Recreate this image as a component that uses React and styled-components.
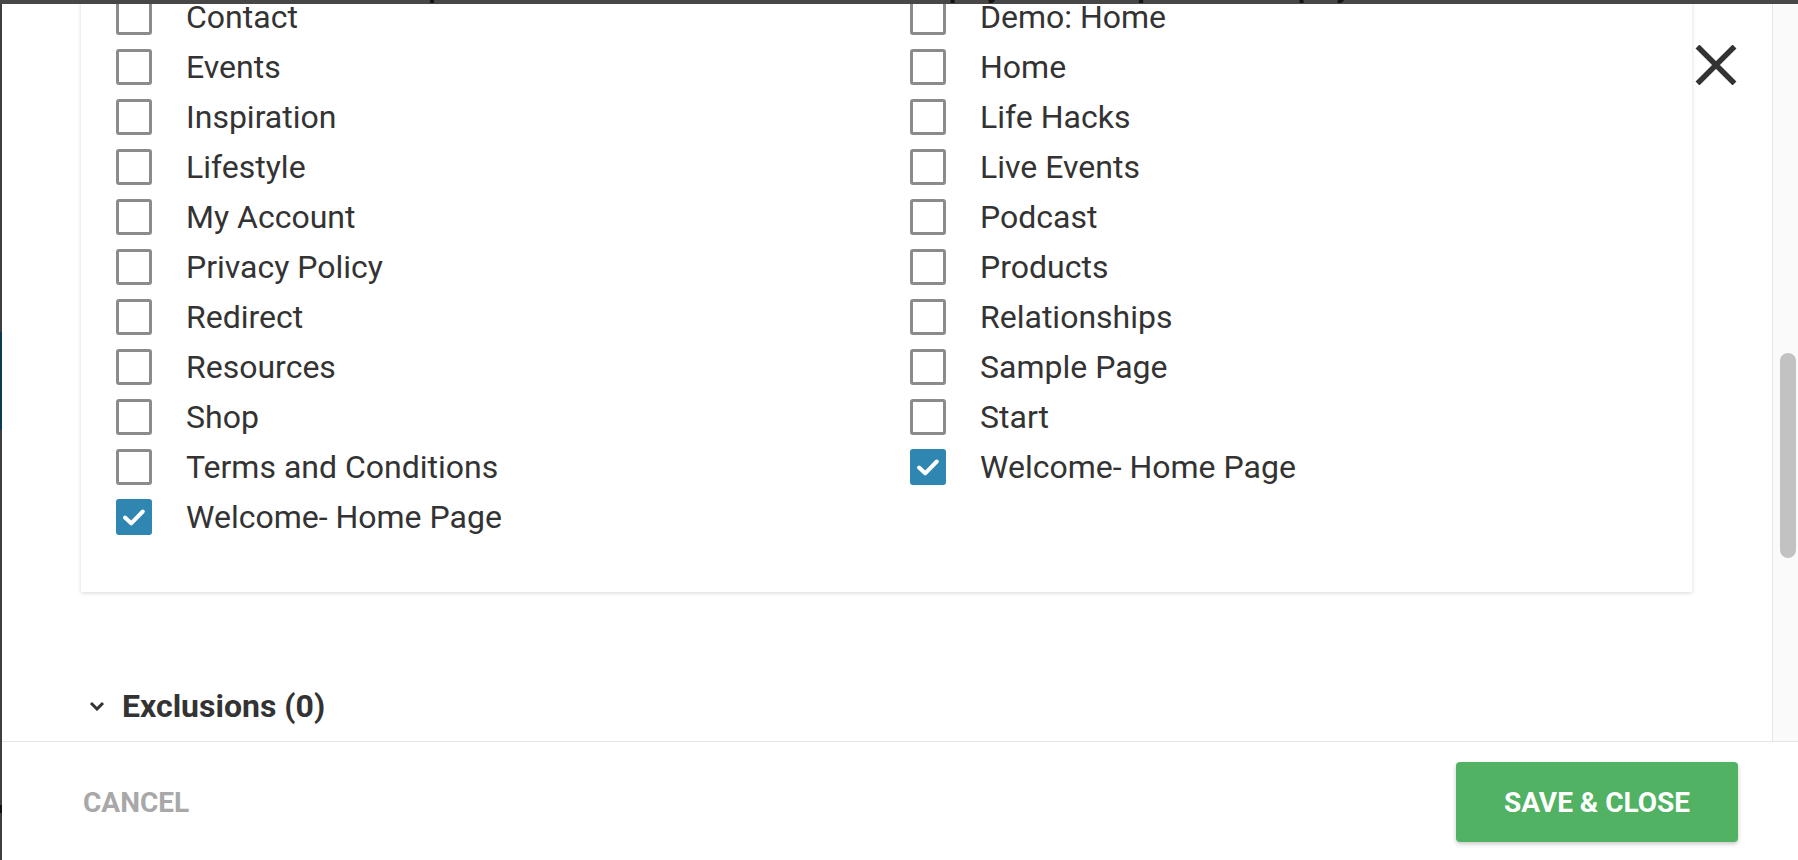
import React from "react";
import styled, { createGlobalStyle } from "styled-components";

const GlobalStyle = createGlobalStyle`
  html, body {
    margin: 0;
    padding: 0;
    height: 100%;
    overflow: hidden;
    font-family: Roboto, "Liberation Sans", Arial, sans-serif;
  }
  * { box-sizing: border-box; }
`;

const leftPages = [
  { label: "Contact" },
  { label: "Events" },
  { label: "Inspiration" },
  { label: "Lifestyle" },
  { label: "My Account" },
  { label: "Privacy Policy" },
  { label: "Redirect" },
  { label: "Resources" },
  { label: "Shop" },
  { label: "Terms and Conditions" },
  { label: "Welcome- Home Page", checked: true },
];

const rightPages = [
  { label: "Demo: Home" },
  { label: "Home" },
  { label: "Life Hacks" },
  { label: "Live Events" },
  { label: "Podcast" },
  { label: "Products" },
  { label: "Relationships" },
  { label: "Sample Page" },
  { label: "Start" },
  { label: "Welcome- Home Page", checked: true },
];

// table header of the page behind the modal, only its bottom edge shows
const headers = [
  { text: "Impress", width: 172 },
  { text: "Convers", width: 172 },
  { text: "Convers", width: 169 },
  { text: "Display On Desktop", width: 349 },
  { text: "Display On Mobile", width: 300 },
];

const Page = styled.div`
  display: grid;
  grid-template-columns: 2px 1fr;
  grid-template-rows: 4px 1fr;
  width: 100vw;
  height: 100vh;
  background: #424242;
`;

const BackdropHeader = styled.div`
  grid-column: 1 / 3;
  display: flex;
  overflow: hidden;
  padding-left: 396px;
  background: #474747;
`;

const BackdropLabel = styled.span`
  flex: 0 0 ${(p) => p.width}px;
  overflow: hidden;
  margin-top: -28px;
  font-size: 28px;
  line-height: 32px;
  font-weight: 700;
  color: #141414;
  white-space: nowrap;
`;

const BackdropSide = styled.div`
  display: flex;
  flex-direction: column;
  background: #3e3e3e;
`;

const SideAccent = styled.div`
  margin-top: ${(p) => p.offset}px;
  height: ${(p) => p.size}px;
  background: ${(p) => p.color};
`;

const Modal = styled.div`
  position: relative;
  display: flex;
  flex-direction: column;
  min-height: 0;
  background: #fff;
`;

const Body = styled.div`
  display: flex;
  flex: 1;
  min-height: 0;
`;

const ScrollArea = styled.div`
  flex: 1;
  overflow: hidden;
  padding: 0 80px 0 79px;
`;

const Card = styled.div`
  margin-top: -42px;
  padding: 30px 0 50px 35px;
  background: #fff;
  box-shadow: 0 1px 4px rgba(0, 0, 0, 0.16);
  display: grid;
  grid-template-columns: 794px 1fr;
`;

const Column = styled.div`
  display: flex;
  flex-direction: column;
`;

const Row = styled.label`
  display: flex;
  align-items: center;
  gap: 34px;
  height: 50px;
  font-size: 32px;
  color: #333;
  cursor: pointer;
`;

const Box = styled.span`
  display: flex;
  align-items: center;
  justify-content: center;
  flex: 0 0 36px;
  width: 36px;
  height: 36px;
  border-radius: 3px;
  border: 3px solid ${(p) => (p.checked ? "#2e86b1" : "#8b8b8b")};
  background: ${(p) => (p.checked ? "#2e86b1" : "#fff")};
`;

const Section = styled.div`
  display: flex;
  align-items: center;
  gap: 17px;
  margin-top: 95px;
  padding-left: 8px;
  font-size: 32px;
  line-height: 38px;
  font-weight: 700;
  color: #333;
`;

const Track = styled.div`
  flex: 0 0 26px;
  display: flex;
  flex-direction: column;
  align-items: flex-end;
  padding-right: 2px;
  background: #fafafa;
  border-left: 1px solid #e6e6e6;
`;

const Thumb = styled.div`
  width: 16px;
  margin-top: 349px;
  height: 205px;
  border-radius: 8px;
  background: #c2c2c2;
`;

const CloseButton = styled.button`
  position: absolute;
  top: 39px;
  right: 60px;
  width: 44px;
  height: 44px;
  padding: 0;
  border: 0;
  background: transparent;
  display: flex;
  align-items: center;
  justify-content: center;
  cursor: pointer;
`;

const Footer = styled.div`
  flex: 0 0 119px;
  display: flex;
  align-items: flex-start;
  justify-content: space-between;
  padding: 20px 60px 0 81px;
  border-top: 1px solid #e4e4e4;
`;

const CancelButton = styled.button`
  height: 80px;
  padding: 0;
  border: 0;
  background: transparent;
  font-family: inherit;
  font-size: 28px;
  font-weight: 700;
  color: #a8a8a8;
  cursor: pointer;
`;

const SaveButton = styled.button`
  width: 282px;
  height: 80px;
  border: 0;
  border-radius: 4px;
  background: #50b262;
  box-shadow: 0 2px 4px rgba(0, 0, 0, 0.22);
  font-family: inherit;
  font-size: 28px;
  font-weight: 700;
  color: #fff;
  cursor: pointer;
`;

const CheckIcon = () => (
  <svg width="30" height="30" viewBox="0 0 30 30">
    <path
      d="M6 15.5 L12.2 21.3 L23.8 9.5"
      fill="none"
      stroke="#fff"
      strokeWidth="4"
      strokeLinecap="round"
      strokeLinejoin="round"
    />
  </svg>
);

const Checkbox = ({ label, checked }) => (
  <Row>
    <Box checked={checked}>{checked && <CheckIcon />}</Box>
    {label}
  </Row>
);

export default function App() {
  return (
    <>
      <GlobalStyle />
      <Page>
        <BackdropHeader>
          {headers.map((h, i) => (
            <BackdropLabel key={i} width={h.width}>
              {h.text}
            </BackdropLabel>
          ))}
        </BackdropHeader>
        <BackdropSide>
          <SideAccent offset={328} size={98} color="#0b3a57" />
          <SideAccent offset={375} size={8} color="#111" />
        </BackdropSide>
        <Modal>
          <Body>
            <ScrollArea>
              <Card>
                <Column>
                  {leftPages.map((p) => (
                    <Checkbox key={p.label} {...p} />
                  ))}
                </Column>
                <Column>
                  {rightPages.map((p) => (
                    <Checkbox key={p.label} {...p} />
                  ))}
                </Column>
              </Card>
              <Section>
                <svg width="16" height="10" viewBox="0 0 16 10">
                  <path
                    d="M2 2 L8 8 L14 2"
                    fill="none"
                    stroke="#333"
                    strokeWidth="3"
                  />
                </svg>
                Exclusions (0)
              </Section>
            </ScrollArea>
            <Track>
              <Thumb />
            </Track>
          </Body>
          <CloseButton aria-label="Close">
            <svg width="42" height="40" viewBox="0 0 42 40">
              <path
                d="M2.5 1.5 L39.5 38.5 M39.5 1.5 L2.5 38.5"
                stroke="#333"
                strokeWidth="5.5"
              />
            </svg>
          </CloseButton>
          <Footer>
            <CancelButton>CANCEL</CancelButton>
            <SaveButton>SAVE &amp; CLOSE</SaveButton>
          </Footer>
        </Modal>
      </Page>
    </>
  );
}
